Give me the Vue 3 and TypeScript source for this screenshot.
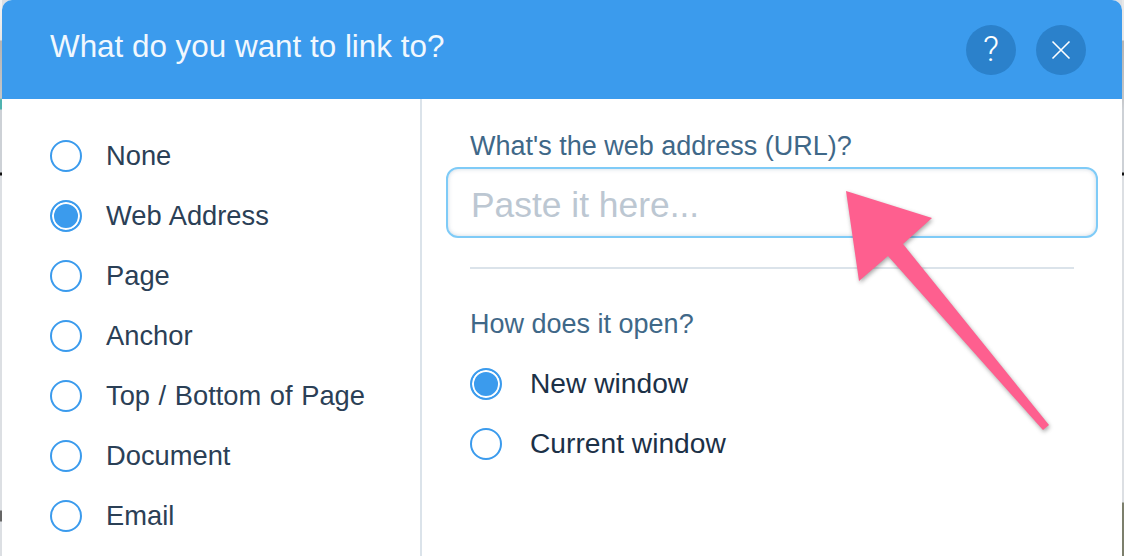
<script setup lang="ts">
import { ref } from 'vue'

const linkTypes: string[] = ['None', 'Web Address', 'Page', 'Anchor', 'Top / Bottom of Page', 'Document', 'Email']
const openModes: string[] = ['New window', 'Current window']
const linkType = ref<string>('Web Address')
const openMode = ref<string>('New window')
</script>

<template>
  <div class="page">
    <div class="dialog">
      <header class="head">
        <h1 class="title">What do you want to link to?</h1>
        <button class="round help" type="button">?</button>
        <button class="round" type="button" aria-label="Close">
          <svg width="20" height="20" viewBox="0 0 20 20" fill="none" stroke="#fff" stroke-width="1.6">
            <path d="M1.5 1.5 18.5 18.5M18.5 1.5 1.5 18.5" />
          </svg>
        </button>
      </header>
      <div class="body">
        <aside class="types">
          <div v-for="t in linkTypes" :key="t" class="row" @click="linkType = t">
            <span class="radio" :class="{ on: linkType === t }"></span>
            <span class="row-label">{{ t }}</span>
          </div>
        </aside>
        <section class="pane">
          <label class="caption" for="url">What's the web address (URL)?</label>
          <input id="url" class="url" type="text" placeholder="Paste it here..." />
          <hr class="rule" />
          <div class="caption open-caption">How does it open?</div>
          <div v-for="m in openModes" :key="m" class="row mode" @click="openMode = m">
            <span class="radio" :class="{ on: openMode === m }"></span>
            <span class="row-label strong">{{ m }}</span>
          </div>
        </section>
      </div>
    </div>
    <svg class="arrow" width="1124" height="556" viewBox="0 0 1124 556">
      <polygon points="846,191 932,218 903,244 1049,425 1043,430 888,256 859,281" fill="#fe5f8f" />
    </svg>
  </div>
</template>

<style scoped>
.page {
  position: relative;
  width: 1124px;
  height: 556px;
  overflow: hidden;
  box-sizing: border-box;
  padding: 0 2px;
  display: flex;
  font-family: "Liberation Sans", Arial, sans-serif;
  background-color: #dcdfe3;
  background-image:
    linear-gradient(to bottom, #f4f4f4 0, #e6e6e6 40px, #b4b4b4 41px, #c4c6c8 98px, #4fb3b0 100px, #4fb3b0 109px, #cdd1d6 110px, #cdd1d6 172px, #111 173px, #111 175px, #dcdfe3 176px, #dcdfe3 510px, #666 511px, #666 521px, #dcdfe3 522px),
    linear-gradient(to bottom, #e8e8e8 0, #e8e8e8 40px, #b4b4b4 41px, #c4c6c8 98px, #cdd1d6 110px, #cdd1d6 172px, #111 173px, #111 175px, #dcdfe3 176px, #dcdfe3 502px, #7c7f6c 503px);
  background-size: 2px 100%, 2px 100%;
  background-position: left top, right top;
  background-repeat: no-repeat;
}
.dialog {
  flex: 1;
  display: flex;
  flex-direction: column;
  background: #fff;
  border-radius: 10px 10px 0 0;
  overflow: hidden;
}
.head {
  height: 99px;
  flex: none;
  box-sizing: border-box;
  padding: 0 36px 0 48px;
  display: flex;
  align-items: center;
  gap: 20px;
  background: #3b9bed;
  color: #fff;
}
.title {
  flex: 1;
  margin: 0 0 6px;
  font-size: 31.4px;
  font-weight: 400;
  line-height: 40px;
  color: #f1f8fe;
}
.round {
  width: 50px;
  height: 50px;
  padding: 0;
  border: 0;
  border-radius: 50%;
  background: #2b81cb;
  color: #fff;
  display: flex;
  align-items: center;
  justify-content: center;
  font-family: inherit;
}
.help {
  font-family: Roboto, "Liberation Sans", sans-serif;
  font-size: 35px;
  font-weight: 300;
}
.body {
  flex: 1;
  display: flex;
  min-height: 0;
}
.types {
  width: 420px;
  flex: none;
  box-sizing: border-box;
  padding: 27px 0 0 48px;
  border-right: 2px solid #dbe3ea;
}
.row {
  height: 60px;
  display: flex;
  align-items: center;
  gap: 24px;
}
.radio {
  width: 32px;
  height: 32px;
  flex: none;
  box-sizing: border-box;
  border: 2px solid #3b9bed;
  border-radius: 50%;
  background: #fff;
}
.radio.on {
  background: #3b9bed;
  box-shadow: inset 0 0 0 2px #fff;
}
.row-label {
  font-size: 27.3px;
  word-spacing: 1px;
  color: #2b4056;
}
.pane {
  flex: 1;
  box-sizing: border-box;
  padding: 27px 48px 0;
  display: flex;
  flex-direction: column;
}
.caption {
  font-size: 27px;
  line-height: 40px;
  color: #3f6888;
}
.url {
  width: 652px;
  height: 71px;
  flex: none;
  box-sizing: border-box;
  margin: 1px 0 0 -24px;
  padding: 5px 23px 0;
  border: 2px solid #7fcbf7;
  border-radius: 12px;
  outline: 0;
  background: #fff;
  box-shadow: inset 0 0 4px rgba(90, 120, 150, 0.3);
  font-family: inherit;
  font-size: 35.4px;
  color: #1c3147;
}
.url::placeholder {
  color: #bcc7d2;
  opacity: 1;
}
.rule {
  width: 604px;
  height: 2px;
  margin: 29px 0 0;
  border: 0;
  background: #dbe3ea;
}
.open-caption {
  margin-top: 35px;
}
.open-caption + .mode {
  margin-top: 10px;
}
.mode {
  gap: 28px;
}
.strong {
  font-size: 28.2px;
  word-spacing: 0;
  margin-bottom: 2px;
  color: #1c3147;
}
.arrow {
  position: absolute;
  left: 0;
  top: 0;
  pointer-events: none;
  filter: drop-shadow(1px 2px 2px rgba(60, 60, 60, 0.45));
}
</style>

<style>
html, body {
  margin: 0;
  background: #fff;
}
</style>
